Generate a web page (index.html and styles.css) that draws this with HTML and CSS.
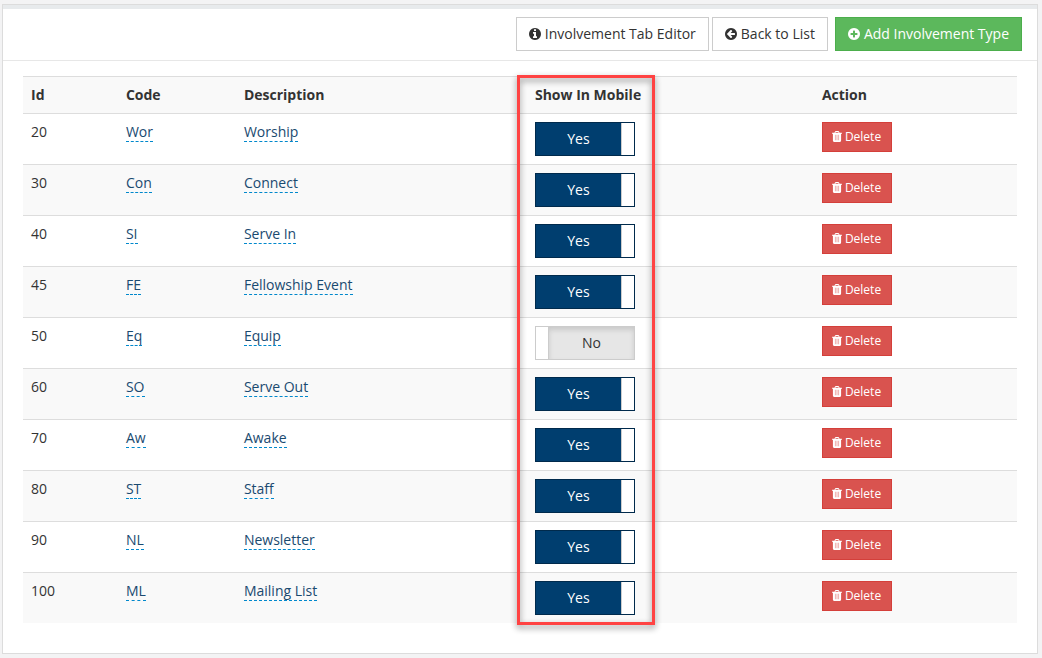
FILE: index.html
```
<!DOCTYPE html>
<html lang="en">
<head>
  <meta charset="UTF-8" />
  <title>Involvement Types</title>
  <meta name="viewport" content="width=device-width, initial-scale=1.0"/>
  <link rel="stylesheet" href="styles.css">
</head>
<body>
  <svg class="sprite" aria-hidden="true">
    <symbol id="icon-info" viewBox="128 128 1536 1536">
      <path d="M1152 1376v-160q0-14-9-23t-23-9h-96v-512q0-14-9-23t-23-9h-320q-14 0-23 9t-9 23v160q0 14 9 23t23 9h96v320h-96q-14 0-23 9t-9 23v160q0 14 9 23t23 9h448q14 0 23-9t9-23zm-128-896v-160q0-14-9-23t-23-9h-192q-14 0-23 9t-9 23v160q0 14 9 23t23 9h192q14 0 23-9t9-23zm640 416q0 209-103 385.5t-279.5 279.5-385.5 103-385.5-103-279.5-279.5-103-385.5 103-385.5 279.5-279.5 385.5-103 385.5 103 279.5 279.5 103 385.5z"/>
    </symbol>
    <symbol id="icon-back" viewBox="128 128 1536 1536">
      <path d="M1408 960v-128q0-26-19-45t-45-19h-502l189-189q19-19 19-45t-19-45l-91-91q-18-18-45-18t-45 18l-362 362-91 91q-18 18-18 45t18 45l91 91 362 362q18 18 45 18t45-18l91-91q18-18 18-45t-18-45l-189-189h502q26 0 45-19t19-45zm256-64q0 209-103 385.5t-279.5 279.5-385.5 103-385.5-103-279.5-279.5-103-385.5 103-385.5 279.5-279.5 385.5-103 385.5 103 279.5 279.5 103 385.5z"/>
    </symbol>
    <symbol id="icon-plus" viewBox="128 128 1536 1536">
      <path d="M1344 960v-128q0-26-19-45t-45-19h-256v-256q0-26-19-45t-45-19h-128q-26 0-45 19t-19 45v256h-256q-26 0-45 19t-19 45v128q0 26 19 45t45 19h256v256q0 26 19 45t45 19h128q26 0 45-19t19-45v-256h256q26 0 45-19t19-45zm320-64q0 209-103 385.5t-279.5 279.5-385.5 103-385.5-103-279.5-279.5-103-385.5 103-385.5 279.5-279.5 385.5-103 385.5 103 279.5 279.5 103 385.5z"/>
    </symbol>
    <symbol id="icon-trash" viewBox="192 128 1408 1536">
      <path fill-rule="evenodd" d="M608 640h64v768h-64zM864 640h64v768h-64zM1120 640h64v768h-64zM672 384h448l-48-117q-7-9-17-11h-317q-10 2-17 11zm928 32v64q0 14-9 23t-23 9h-96v948q0 83-47 143.5t-113 60.5h-832q-66 0-113-58.5t-47-141.5v-952h-96q-14 0-23-9t-9-23v-64q0-14 9-23t23-9h309l70-167q15-37 54-63t79-26h320q40 0 79 26t54 63l70 167h309q14 0 23 9t9 23z"/>
    </symbol>
  </svg>

  <div class="panel">
    <div class="toolbar">
      <button class="btn" type="button"><svg class="icon"><use href="#icon-info"/></svg>Involvement Tab Editor</button>
      <button class="btn" type="button"><svg class="icon"><use href="#icon-back"/></svg>Back to List</button>
      <button class="btn btn-success" type="button"><svg class="icon"><use href="#icon-plus"/></svg>Add Involvement Type</button>
    </div>

    <div class="content">
      <div class="table-wrap">
        <table>
          <thead>
            <tr>
              <th class="col-id">Id</th>
              <th class="col-code">Code</th>
              <th class="col-desc">Description</th>
              <th class="col-mobile">Show In Mobile</th>
              <th>Action</th>
            </tr>
          </thead>
          <tbody>
            <tr>
              <td>20</td>
              <td><a href="#">Wor</a></td>
              <td><a href="#">Worship</a></td>
              <td><label class="toggle"><input type="checkbox" aria-label="Show Worship in mobile" checked><span class="on">Yes</span><span class="handle"></span><span class="off">No</span></label></td>
              <td><button class="btn-delete" type="button"><svg class="icon"><use href="#icon-trash"/></svg>Delete</button></td>
            </tr>
            <tr>
              <td>30</td>
              <td><a href="#">Con</a></td>
              <td><a href="#">Connect</a></td>
              <td><label class="toggle"><input type="checkbox" aria-label="Show Connect in mobile" checked><span class="on">Yes</span><span class="handle"></span><span class="off">No</span></label></td>
              <td><button class="btn-delete" type="button"><svg class="icon"><use href="#icon-trash"/></svg>Delete</button></td>
            </tr>
            <tr>
              <td>40</td>
              <td><a href="#">SI</a></td>
              <td><a href="#">Serve In</a></td>
              <td><label class="toggle"><input type="checkbox" aria-label="Show Serve In in mobile" checked><span class="on">Yes</span><span class="handle"></span><span class="off">No</span></label></td>
              <td><button class="btn-delete" type="button"><svg class="icon"><use href="#icon-trash"/></svg>Delete</button></td>
            </tr>
            <tr>
              <td>45</td>
              <td><a href="#">FE</a></td>
              <td><a href="#">Fellowship Event</a></td>
              <td><label class="toggle"><input type="checkbox" aria-label="Show Fellowship Event in mobile" checked><span class="on">Yes</span><span class="handle"></span><span class="off">No</span></label></td>
              <td><button class="btn-delete" type="button"><svg class="icon"><use href="#icon-trash"/></svg>Delete</button></td>
            </tr>
            <tr>
              <td>50</td>
              <td><a href="#">Eq</a></td>
              <td><a href="#">Equip</a></td>
              <td><label class="toggle"><input type="checkbox" aria-label="Show Equip in mobile"><span class="on">Yes</span><span class="handle"></span><span class="off">No</span></label></td>
              <td><button class="btn-delete" type="button"><svg class="icon"><use href="#icon-trash"/></svg>Delete</button></td>
            </tr>
            <tr>
              <td>60</td>
              <td><a href="#">SO</a></td>
              <td><a href="#">Serve Out</a></td>
              <td><label class="toggle"><input type="checkbox" aria-label="Show Serve Out in mobile" checked><span class="on">Yes</span><span class="handle"></span><span class="off">No</span></label></td>
              <td><button class="btn-delete" type="button"><svg class="icon"><use href="#icon-trash"/></svg>Delete</button></td>
            </tr>
            <tr>
              <td>70</td>
              <td><a href="#">Aw</a></td>
              <td><a href="#">Awake</a></td>
              <td><label class="toggle"><input type="checkbox" aria-label="Show Awake in mobile" checked><span class="on">Yes</span><span class="handle"></span><span class="off">No</span></label></td>
              <td><button class="btn-delete" type="button"><svg class="icon"><use href="#icon-trash"/></svg>Delete</button></td>
            </tr>
            <tr>
              <td>80</td>
              <td><a href="#">ST</a></td>
              <td><a href="#">Staff</a></td>
              <td><label class="toggle"><input type="checkbox" aria-label="Show Staff in mobile" checked><span class="on">Yes</span><span class="handle"></span><span class="off">No</span></label></td>
              <td><button class="btn-delete" type="button"><svg class="icon"><use href="#icon-trash"/></svg>Delete</button></td>
            </tr>
            <tr>
              <td>90</td>
              <td><a href="#">NL</a></td>
              <td><a href="#">Newsletter</a></td>
              <td><label class="toggle"><input type="checkbox" aria-label="Show Newsletter in mobile" checked><span class="on">Yes</span><span class="handle"></span><span class="off">No</span></label></td>
              <td><button class="btn-delete" type="button"><svg class="icon"><use href="#icon-trash"/></svg>Delete</button></td>
            </tr>
            <tr>
              <td>100</td>
              <td><a href="#">ML</a></td>
              <td><a href="#">Mailing List</a></td>
              <td><label class="toggle"><input type="checkbox" aria-label="Show Mailing List in mobile" checked><span class="on">Yes</span><span class="handle"></span><span class="off">No</span></label></td>
              <td><button class="btn-delete" type="button"><svg class="icon"><use href="#icon-trash"/></svg>Delete</button></td>
            </tr>
          </tbody>
        </table>
        <div class="highlight"></div>
      </div>
    </div>
  </div>
</body>
</html>
```
FILE: styles.css
```
* {
  box-sizing: border-box;
}
body {
  margin: 0;
  padding: 4px 4px 4px 2px;
  background: #f3f3f4;
  color: #333;
  font-family: 'Open Sans', sans-serif;
  font-size: 14px;
  line-height: 20px;
}
.sprite {
  display: none;
}
.panel {
  background: white;
  border: 1px solid #dcdcdc;
}
.toolbar {
  display: flex;
  justify-content: flex-end;
  gap: 3px;
  padding: 8px 15px 9px;
  border-top: 4px solid #e7eaec;
  border-bottom: 1px solid #e7e7e7;
}
.btn {
  height: 34px;
  padding: 0 12px;
  background: white;
  color: #333;
  border: 1px solid #ccc;
  font: inherit;
  white-space: nowrap;
  cursor: pointer;
}
.btn .icon {
  width: 12px;
  height: 12px;
  margin-right: 4px;
  vertical-align: -1px;
}
.btn-success {
  margin-left: 4px;
  background: #5cb85c;
  color: white;
  border-color: #4cae4c;
}
.icon {
  fill: currentColor;
}
.content {
  padding: 15px 20px 30px;
}
.table-wrap {
  position: relative;
}
table {
  width: 100%;
  table-layout: fixed;
  border-collapse: separate;
  border-spacing: 0;
}
th, td {
  padding: 8px;
  border-top: 1px solid #ddd;
  text-align: left;
  vertical-align: top;
}
tr:nth-child(even) td, th {
  background: #f9f9f9;
}
.col-id {
  width: 9.55%;
}
.col-code {
  width: 11.87%;
}
.col-desc {
  width: 29.28%;
}
.col-mobile {
  width: 28.87%;
}
td a {
  color: #1a4a70;
  text-decoration: none;
  border-bottom: 1px dashed #08c;
}

/* on/off switch */
.toggle {
  position: relative;
  display: flex;
  width: 100px;
  height: 34px;
  border: 1px solid #ccc;
  line-height: 32px;
  text-align: center;
  cursor: pointer;
}
.toggle input {
  position: absolute;
  inset: 0;
  width: 100%;
  height: 100%;
  margin: 0;
  opacity: 0;
  cursor: pointer;
}
.toggle .on, .toggle .off {
  flex: 1;
}
.toggle .on {
  display: none;
  background: #003e6f;
  color: white;
}
.toggle .off {
  background: #e6e6e6;
  box-shadow: inset 0 3px 5px rgba(0,0,0,0.125);
}
.toggle .handle {
  width: 13px;
  background: white;
  border-right: 1px solid #ccc;
}
.toggle:has(input:checked) {
  border-color: #002a4c;
}
.toggle input:checked ~ .on {
  display: block;
}
.toggle input:checked ~ .off {
  display: none;
}
.toggle input:checked ~ .handle {
  border-right: none;
  border-left: 1px solid #ccc;
}

.btn-delete {
  display: block;
  height: 30px;
  padding: 0 10px 0 9px;
  background: #d9534f;
  color: white;
  border: 1px solid #d43f3a;
  font: inherit;
  font-size: 12px;
  line-height: 18px;
  white-space: nowrap;
  cursor: pointer;
}
.btn-delete .icon {
  width: 10px;
  height: 11px;
  margin-right: 3px;
  vertical-align: -1px;
}

/* red frame round the mobile column */
.highlight {
  position: absolute;
  top: -1px;
  bottom: -2px;
  left: calc(50.7% - 10px);
  width: 138px;
  border: 3px solid #ff4343;
  filter: drop-shadow(0 3px 3px rgba(0,0,0,0.45));
  pointer-events: none;
}
```
